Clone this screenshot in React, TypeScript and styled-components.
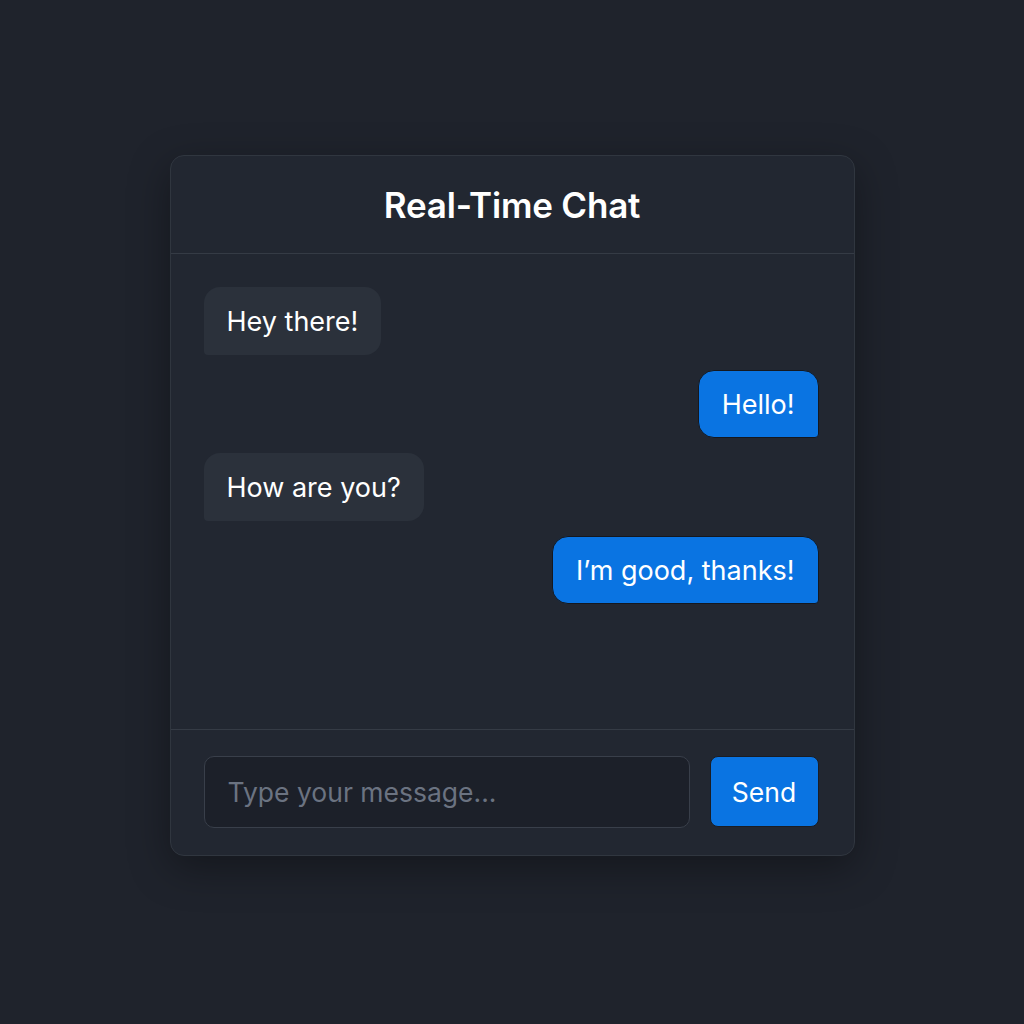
import React from "react";
import styled, { createGlobalStyle } from "styled-components";

const Global = createGlobalStyle`
  html, body { margin: 0; padding: 0; background: #1f232c; }
  body { font-family: Inter, "Noto Sans", sans-serif; -webkit-font-smoothing: antialiased; }
  * { box-sizing: border-box; }
`;

const Page = styled.div`
  width: 1024px;
  height: 1024px;
  display: flex;
  justify-content: center;
  padding-top: 155px;
  background: #1f232c;
`;

const Card = styled.div`
  width: 685px;
  height: 701px;
  display: flex;
  flex-direction: column;
  background: #222731;
  border: 1px solid #30363f;
  border-radius: 14px;
  box-shadow: 0 12px 40px rgba(0, 0, 0, 0.35);
  overflow: hidden;
`;

const Header = styled.div`
  height: 98px;
  flex: none;
  display: flex;
  align-items: center;
  justify-content: center;
  border-bottom: 1px solid #353b45;
`;

const Title = styled.h1`
  margin: 0;
  font-size: 35px;
  font-weight: 600;
  color: #ffffff;
  letter-spacing: -0.2px;
`;

const Messages = styled.div`
  flex: 1;
  display: flex;
  flex-direction: column;
  gap: 15px;
  padding: 33px 35px 0 33px;
`;

const Bubble = styled.div<{ $mine?: boolean }>`
  align-self: ${(p) => (p.$mine ? "flex-end" : "flex-start")};
  height: 68px;
  flex: none;
  display: flex;
  align-items: center;
  padding: 0 23px 0 23px;
  font-size: 27px;
  color: #ffffff;
  background: ${(p) => (p.$mine ? "#0a74e2" : "#2b313b")};
  border-radius: ${(p) => (p.$mine ? "16px 16px 4px 16px" : "16px 16px 16px 4px")};
  ${(p) => (p.$mine ? "border: 1px solid #15181f;" : "")}
`;

const Footer = styled.div`
  height: 126px;
  flex: none;
  display: flex;
  align-items: center;
  gap: 20px;
  padding: 0 35px 2px 33px;
  border-top: 1px solid #353b45;
`;

const Input = styled.input`
  flex: 1;
  height: 72px;
  padding: 0 23px;
  background: #1c2029;
  border: 1px solid #393f4a;
  border-radius: 10px;
  color: #fff;
  font-family: Inter, "Noto Sans", sans-serif;
  font-size: 26.5px;
  outline: none;
  &::placeholder { color: #6b7381; }
`;

const SendButton = styled.button`
  width: 109px;
  height: 71px;
  flex: none;
  background: #0a74e2;
  border: 1px solid #1a1d24;
  border-radius: 8px;
  color: #fff;
  font-family: Inter, "Noto Sans", sans-serif;
  font-size: 26.5px;
`;

export default function App() {
  return (
    <>
      <Global />
      <Page>
        <Card>
          <Header>
            <Title>Real-Time Chat</Title>
          </Header>
          <Messages>
            <Bubble>Hey there!</Bubble>
            <Bubble $mine>Hello!</Bubble>
            <Bubble>How are you?</Bubble>
            <Bubble $mine>I’m good, thanks!</Bubble>
          </Messages>
          <Footer>
            <Input placeholder="Type your message..." />
            <SendButton>Send</SendButton>
          </Footer>
        </Card>
      </Page>
    </>
  );
}
